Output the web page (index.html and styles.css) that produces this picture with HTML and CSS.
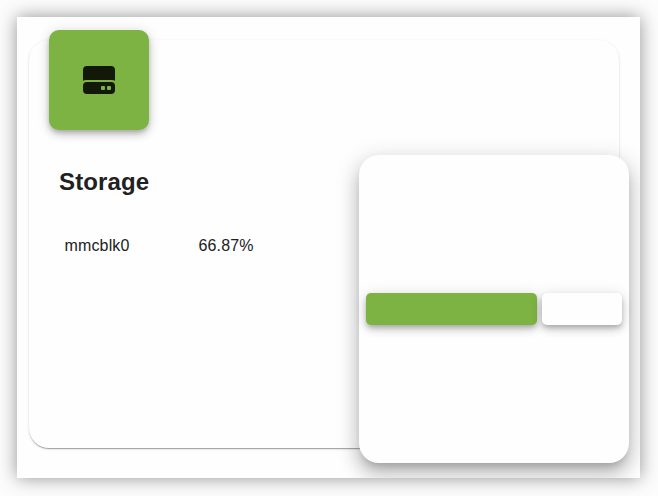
FILE: index.html
```html
<!DOCTYPE html>
<html lang="en">
<head>
<meta charset="utf-8">
<title>Storage</title>
<link rel="stylesheet" href="styles.css">
</head>
<body>
<main class="panel">
  <section class="card">
    <div class="info">
      <div class="icon-tile">
        <svg class="icon" viewBox="0 0 32 28" aria-hidden="true">
          <path d="M0 14.8V4a4 4 0 0 1 4-4h24a4 4 0 0 1 4 4v10.8A5.5 5.5 0 0 0 28 14H4a5.500 5.500 0 0 0-4 .8z"/>
          <path fill-rule="evenodd" d="M4 16h24a4 4 0 0 1 4 4v4a4 4 0 0 1-4 4H4a4 4 0 0 1-4-4v-4a4 4 0 0 1 4-4zm15 4a1 1 0 0 0-1 1v2a1 1 0 0 0 1 1h2a1 1 0 0 0 1-1v-2a1 1 0 0 0-1-1zm6 0a1 1 0 0 0-1 1v2a1 1 0 0 0 1 1h2a1 1 0 0 0 1-1v-2a1 1 0 0 0-1-1z"/>
        </svg>
      </div>
      <h1 class="title">Storage</h1>
      <div class="details">
        <span>mmcblk0</span>
        <span>66.87%</span>
      </div>
    </div>
    <div class="chart">
      <div class="bar bar-used"></div>
      <div class="bar bar-free"></div>
    </div>
  </section>
</main>
</body>
</html>
```
FILE: styles.css
```css
* {
  box-sizing: border-box;
}

body {
  margin: 0;
  padding: 17px 18px 18px 17px;
  height: 496px;
  overflow: hidden;
  background: #fcfcfc;
  color: #212121;
  font-family: "Liberation Sans", Arial, sans-serif;
}

.panel {
  height: 461px;
  padding: 23px 21px 30px 12px;
  overflow: hidden;
  background: #fefefe;
  box-shadow: 0 0 17px rgba(0, 0, 0, 0.42);
}

.card {
  display: flex;
  justify-content: space-between;
  height: 408px;
  border-radius: 20px;
  background: #fefefe;
  box-shadow: 0 2px 1px -1px rgba(0, 0, 0, 0.2), 0 1px 1px rgba(0, 0, 0, 0.14), 0 1px 3px rgba(0, 0, 0, 0.12);
}

.info {
  width: 260px;
  margin-top: -10px;
  padding-left: 20px;
}

.icon-tile {
  display: grid;
  place-items: center;
  width: 100px;
  height: 100px;
  border-radius: 10px;
  background: #7cb342;
  box-shadow: 0 3px 5px -1px rgba(0, 0, 0, 0.2), 0 5px 8px rgba(0, 0, 0, 0.14), 0 1px 14px rgba(0, 0, 0, 0.12);
}

.icon {
  width: 32px;
  height: 28px;
  fill: #121909;
}

.title {
  margin: 36px 0 0 10px;
  font-size: 24px;
  line-height: 32px;
  letter-spacing: 0.12px;
}

.details {
  display: grid;
  grid-template-columns: 134px 1fr;
  margin: 38px 0 0 15.5px;
  font-size: 16px;
  line-height: 20px;
  letter-spacing: 0.15px;
}

.chart {
  display: grid;
  grid-template-columns: 171px 80px;
  gap: 5px;
  align-content: center;
  justify-content: center;
  width: 270px;
  height: 308px;
  margin: 115px -10px 0 0;
  border-radius: 20px;
  background: #fefefe;
  box-shadow: 0 7px 8px -4px rgba(0, 0, 0, 0.2), 0 12px 17px 2px rgba(0, 0, 0, 0.14), 0 5px 22px 4px rgba(0, 0, 0, 0.12);
}

.bar {
  height: 32px;
  border-radius: 5px;
  box-shadow: 0 3px 5px -1px rgba(0, 0, 0, 0.2), 0 5px 8px rgba(0, 0, 0, 0.14), 0 1px 14px rgba(0, 0, 0, 0.12);
}

.bar-used {
  background: #7cb342;
}

.bar-free {
  background: #fefefe;
}
```
